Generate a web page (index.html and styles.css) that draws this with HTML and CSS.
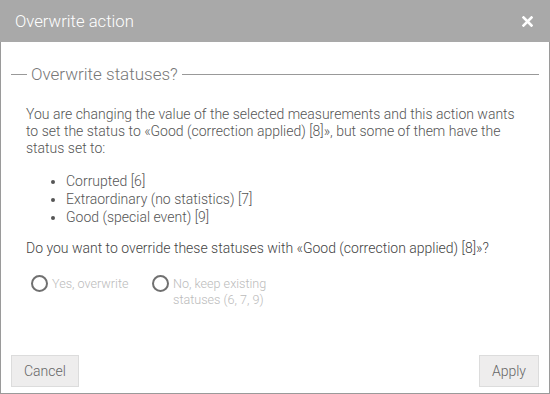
FILE: index.html
```html
<!DOCTYPE html>
<html>
<head>
<meta charset="utf-8">
<link rel="stylesheet" href="styles.css">
</head>
<body>
<div class="dialog">
	<div class="dialog_header">
		<span class="dialog_title">Overwrite action</span>
		<span class="dialog_close">
			<svg width="11" height="11" viewBox="0 0 11 11"><path d="M1.5 1.5 L9.5 9.5 M9.5 1.5 L1.5 9.5" stroke="#fff" stroke-width="2.6" stroke-linecap="square"/></svg>
		</span>
	</div>
	<div class="dialog_body">
		<fieldset class="group">
			<legend>Overwrite statuses?</legend>
			<p class="message">You are changing the value of the selected measurements and this action wants to set the status to «Good (correction applied) [8]», but some of them have the status set to:</p>
			<ul class="status_list">
				<li>Corrupted [6]</li>
				<li>Extraordinary (no statistics) [7]</li>
				<li>Good (special event) [9]</li>
			</ul>
			<p class="question">Do you want to override these statuses with «Good (correction applied) [8]»?</p>
			<div class="choices">
				<label class="choice"><span class="radio"></span><span class="choice_text">Yes, overwrite</span></label>
				<label class="choice"><span class="radio"></span><span class="choice_text">No, keep existing statuses (6, 7, 9)</span></label>
			</div>
		</fieldset>
		<div class="dialog_footer">
			<button class="btn">Cancel</button>
			<button class="btn">Apply</button>
		</div>
	</div>
</div>
</body>
</html>
```

FILE: styles.css
```css
* {margin: 0; padding: 0; box-sizing: border-box;}
body {font-family: Roboto, "Liberation Sans", sans-serif; font-weight: 300; background: #fff;}

.dialog {width: 550px; height: 394px; display: flex; flex-direction: column;}
.dialog_header {height: 42px; background: #a9a9a9; color: #fff; display: flex; align-items: center; justify-content: space-between; padding: 0 17px 0 15px;}
.dialog_title {font-size: 16.7px;}
.dialog_close {display: flex; margin-top: 1px;}

.dialog_body {flex: 1; border: 1px solid #9a9a9a; border-top: none; display: flex; flex-direction: column;}

.group {border: none; border-top: 1px solid #999; margin: 22px 10px 0 10px; padding: 15px 15px 0 15px;}
.group legend {font-size: 17px; color: #777; padding: 0 4px; margin-left: 1px;}

.message {font-size: 14px; line-height: 17px; color: #555; margin-top: 7px;}
.status_list {font-size: 14px; line-height: 18px; color: #555; padding-left: 40px; margin-top: 15px;}
.question {font-size: 14px; line-height: 18px; color: #444; margin-top: 13px;}

.choices {display: flex; margin-top: 19px; margin-left: 5px;}
.choice {display: flex; align-items: flex-start; width: 121px; font-size: 12.6px; line-height: 16px; color: #bbb;}
.radio {width: 17px; height: 17px; border: 2px solid #707070; border-radius: 50%; flex: none; margin-right: 4px; margin-top: -1px;}
.choice_text {width: 98px;}

.dialog_footer {margin-top: auto; display: flex; justify-content: space-between; padding: 0 10px 6px 10px;}
.btn {font-family: Roboto, "Liberation Sans", sans-serif; font-weight: 300; font-size: 14px; color: #666; background: #eeeded; border: 1px solid #dcdcdc; height: 32px; padding: 0 12px;}
```
